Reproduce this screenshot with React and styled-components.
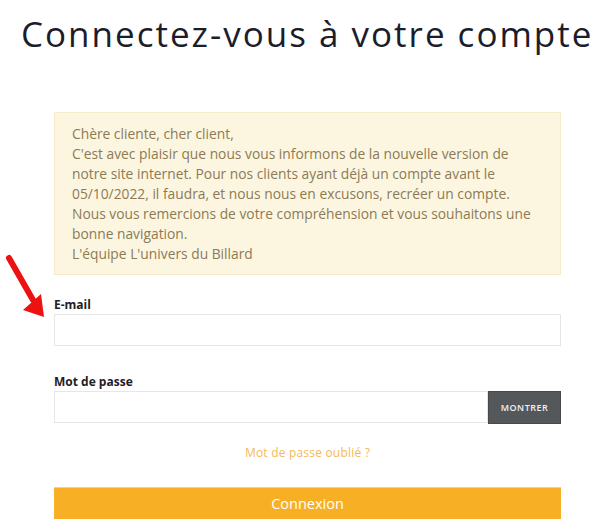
import React from "react";
import styled, { createGlobalStyle } from "styled-components";

const GlobalStyle = createGlobalStyle`
  body {
    margin: 0;
    background: #fff;
    font-family: "Open Sans", "Liberation Sans", sans-serif;
  }
`;

const Page = styled.div`
  width: 600px;
  height: 531px;
  position: relative;
  overflow: hidden;
`;

const Title = styled.h1`
  margin: 0;
  padding: 12px 0 0 21px;
  font-family: "Open Sans", sans-serif;
  font-weight: 400;
  font-size: 35px;
  line-height: 44px;
  letter-spacing: 2px;
  color: #1c1d2b;
  white-space: nowrap;
`;

const Form = styled.div`
  width: 507px;
  margin: 56px 0 0 54px;
  display: flex;
  flex-direction: column;
`;

const Notice = styled.div`
  background: #fcf6e1;
  border: 1px solid #f6eccb;
  padding: 11px 26px 10px 17px;
  color: #8c7a55;
  font-size: 13.8px;
  line-height: 20px;
`;

const Field = styled.div`
  display: flex;
  flex-direction: column;
  margin-top: ${p => p.gap}px;
`;

const Label = styled.label`
  font-size: 12px;
  font-weight: 700;
  color: #1f2025;
  line-height: 15px;
  margin-bottom: 2px;
`;

const InputRow = styled.div`
  display: flex;
`;

const Input = styled.input`
  flex: 1 1 auto;
  min-width: 0;
  height: 32px;
  box-sizing: border-box;
  border: 1px solid #e6e6e6;
  outline: none;
  padding: 0 10px;
  font-size: 14px;
  background: #fff;
`;

const ShowButton = styled.button`
  flex: 0 0 73px;
  height: 33px;
  box-sizing: border-box;
  border: 1px solid #47494b;
  background: #55585b;
  color: #f0f0f0;
  font-family: "Open Sans", sans-serif;
  font-size: 9px;
  font-weight: 600;
  letter-spacing: 0.5px;
  cursor: pointer;
`;

const Forgot = styled.a`
  align-self: center;
  margin-top: 21px;
  color: #f5b959;
  font-size: 12px;
  line-height: 16px;
  letter-spacing: 0.2px;
  text-decoration: none;
`;

const Submit = styled.button`
  margin-top: 26px;
  height: 32px;
  border: none;
  border-top: 1px solid #fad27a;
  background: #f7b026;
  color: #fff;
  font-family: "Open Sans", sans-serif;
  font-size: 14.5px;
  cursor: pointer;
`;

const Arrow = styled.svg`
  position: absolute;
  left: 0;
  top: 250px;
`;

export default function App() {
  return (
    <>
      <GlobalStyle />
      <Page>
        <Title>Connectez-vous à votre compte</Title>
        <Form>
          <Notice>
            Chère cliente, cher client,
            <br />
            C'est avec plaisir que nous vous informons de la nouvelle version de
            notre site internet. Pour nos clients ayant déjà un compte avant le
            05/10/2022, il faudra, et nous nous en excusons, recréer un compte.
            Nous vous remercions de votre compréhension et vous souhaitons une
            bonne navigation.
            <br />
            L'équipe L'univers du Billard
          </Notice>
          <Field gap={22}>
            <Label>E-mail</Label>
            <Input type="email" />
          </Field>
          <Field gap={28}>
            <Label>Mot de passe</Label>
            <InputRow>
              <Input type="password" />
              <ShowButton>MONTRER</ShowButton>
            </InputRow>
          </Field>
          <Forgot href="#">Mot de passe oublié ?</Forgot>
          <Submit>Connexion</Submit>
        </Form>
        <Arrow width="60" height="80" viewBox="0 0 60 80">
          <line x1="9" y1="8" x2="33" y2="50" stroke="#ee1111" strokeWidth="6" strokeLinecap="round" />
          <polygon points="23,60 44,67 41,44" fill="#ee1111" />
        </Arrow>
      </Page>
    </>
  );
}
